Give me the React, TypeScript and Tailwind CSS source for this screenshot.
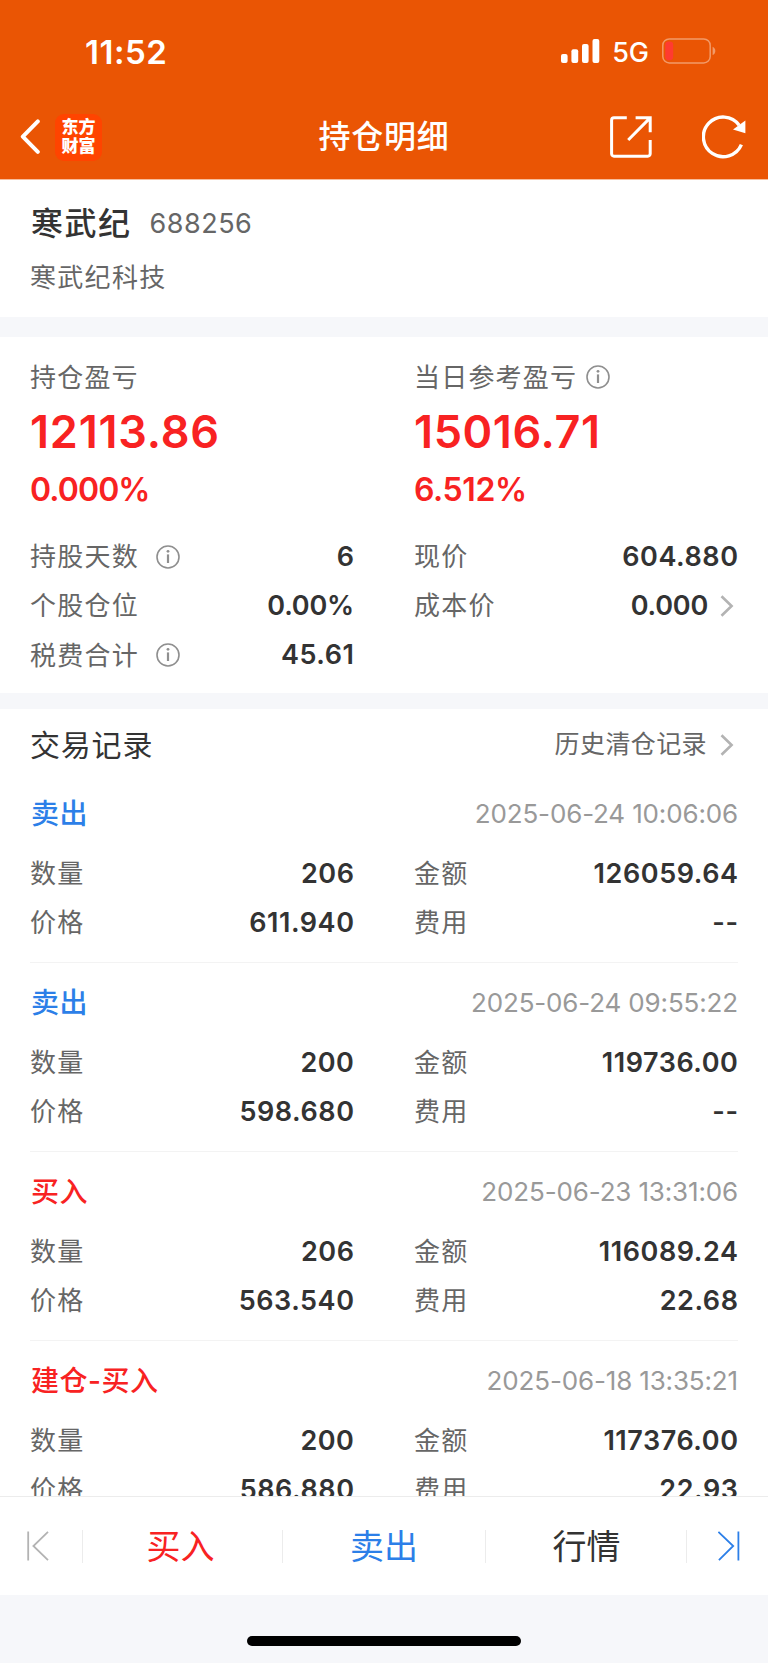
import React from 'react';

type Trade = {
  side: string;
  isSell: boolean;
  time: string;
  quantity: string;
  amount: string;
  price: string;
  fee: string;
};

const trades: Trade[] = [
  { side: '卖出', isSell: true, time: '2025-06-24 10:06:06', quantity: '206', amount: '126059.64', price: '611.940', fee: '--' },
  { side: '卖出', isSell: true, time: '2025-06-24 09:55:22', quantity: '200', amount: '119736.00', price: '598.680', fee: '--' },
  { side: '买入', isSell: false, time: '2025-06-23 13:31:06', quantity: '206', amount: '116089.24', price: '563.540', fee: '22.68' },
  { side: '建仓-买入', isSell: false, time: '2025-06-18 13:35:21', quantity: '200', amount: '117376.00', price: '586.880', fee: '22.93' },
];

function InfoIcon() {
  return (
    <svg width="24" height="24" viewBox="0 0 24 24" fill="none" stroke="#8f8f8f" className="shrink-0">
      <circle cx="12" cy="12" r="11" strokeWidth="1.6" />
      <path d="M12 9.4v8.6" strokeWidth="2.2" />
      <circle cx="12" cy="6.3" r="1.4" fill="#8f8f8f" stroke="none" />
    </svg>
  );
}

function ChevronRight() {
  return (
    <svg width="14" height="22" viewBox="0 0 14 22" fill="none" stroke="#b3b3b3" strokeWidth="2.6" className="shrink-0">
      <path d="M1.5 1.2 11.6 11 1.5 20.8" />
    </svg>
  );
}

function StatusBar() {
  return (
    <div className="flex h-[102px] items-center justify-between pl-[85px] pr-[52px] text-white">
      <span className="mt-[2px] text-[33px] font-semibold leading-none tracking-[0.5px]">11:52</span>
      <div className="flex items-center">
        <svg width="39" height="24" viewBox="0 0 39 24" fill="white">
          <rect x="0" y="15" width="6.6" height="9" rx="2" />
          <rect x="10.4" y="10.3" width="6.8" height="13.7" rx="2" />
          <rect x="21" y="5" width="6.6" height="19" rx="2" />
          <rect x="31.5" y="0" width="6.8" height="24" rx="2" />
        </svg>
        <span className="ml-3 mt-[3px] text-[27px] font-medium leading-none">5G</span>
        <svg width="54" height="26" viewBox="0 0 54 26" fill="none" className="ml-[13px]">
          <rect x="0.8" y="0.9" width="47.4" height="24" rx="6.5" stroke="#f29a68" strokeWidth="1.5" />
          <rect x="3.2" y="3.6" width="8" height="18.6" rx="3.4" fill="#ff3b30" />
          <path d="M50.6 8.8c3.6 1.4 3.6 6.8 0 8.2z" fill="#f29a68" />
        </svg>
      </div>
    </div>
  );
}

function NavBar() {
  return (
    <div className="grid h-[70px] grid-cols-[1fr_auto_1fr] items-center text-white">
      <div className="flex items-center pl-[19px]">
        <svg width="22" height="36" viewBox="0 0 22 36" fill="none" stroke="white" strokeWidth="4" strokeLinecap="round" strokeLinejoin="round">
          <path d="M18.8 2.4 3.8 17.6 18.8 32.8" />
        </svg>
        <div className="ml-[14px] flex h-[47px] w-[47px] flex-col items-center justify-center rounded-[9px] bg-[#ff4400] text-[17px] font-black leading-[19px]">
          <span>东方</span>
          <span>财富</span>
        </div>
      </div>
      <h1 className="text-[32px] font-medium leading-none tracking-[0.7px]">持仓明细</h1>
      <div className="flex items-center justify-end gap-[50px] pr-[22px]">
        <svg width="42" height="42" viewBox="0 0 42 42" fill="none" stroke="white" strokeWidth="3">
          <path d="M16.8 1.8H4a2.4 2.4 0 0 0-2.4 2.4v33.6A2.4 2.4 0 0 0 4 40.2h33.8a2.4 2.4 0 0 0 2.4-2.4V24" />
          <path d="M25.6 1.8h14.6v14.4M39.6 2.4 18.2 24" />
        </svg>
        <svg width="44" height="44" viewBox="0 0 44 44" fill="none" stroke="white" strokeWidth="3.4">
          <path d="M39.4 29.6A19.8 19.8 0 1 1 37.2 10.2" />
          <path d="M43.4 5.4v12.8L31 14.4z" fill="white" stroke="none" />
        </svg>
      </div>
    </div>
  );
}

function Row({ label, value, info, chevron }: { label: string; value: string; info?: boolean; chevron?: boolean }) {
  const tracking = value.startsWith('0.') ? 'tracking-[-0.2px]' : 'tracking-[0.55px] -mr-[0.5px]';

  return (
    <div className="flex h-[49px] items-center">
      <span className="mr-[17px] text-[26px] tracking-[1.25px] text-[#666]">{label}</span>
      {info && <InfoIcon />}
      <span className="ml-auto flex items-center">
        <span className={`mt-px text-[27px] font-semibold text-[#333] ${tracking}`}>{value}</span>
        {chevron && (
          <span className="ml-3 mr-1">
            <ChevronRight />
          </span>
        )}
      </span>
    </div>
  );
}

function Summary() {
  return (
    <section className="h-[356px] bg-white px-[30px] pt-[18px]">
      <div className="grid grid-cols-2 gap-x-[60px]">
        <div>
          <div className="flex h-11 items-center text-[26px] tracking-[1.2px] text-[#666]">持仓盈亏</div>
          <div className="flex h-[66px] items-center text-[45px] font-semibold tracking-[0.8px] text-[#f82222]">12113.86</div>
          <div className="flex h-[50px] items-center text-[32px] font-semibold tracking-[-0.9px] text-[#f82222]">0.000%</div>
        </div>
        <div>
          <div className="flex h-11 items-center gap-[9px] text-[26px] tracking-[1.2px] text-[#666]">
            当日参考盈亏
            <InfoIcon />
          </div>
          <div className="flex h-[66px] items-center text-[45px] font-semibold tracking-[0.6px] text-[#f82222]">15016.71</div>
          <div className="flex h-[50px] items-center text-[32px] font-semibold tracking-[-0.4px] text-[#f82222]">6.512%</div>
        </div>
      </div>
      <div className="mt-[17px] grid grid-cols-2 gap-x-[60px] gap-y-[0.3px]">
        <Row label="持股天数" value="6" info />
        <Row label="现价" value="604.880" />
        <Row label="个股仓位" value="0.00%" />
        <Row label="成本价" value="0.000" chevron />
        <Row label="税费合计" value="45.61" info />
      </div>
    </section>
  );
}

function TradeItem({ trade }: { trade: Trade }) {
  return (
    <div className="h-[189px] shrink-0 border-b border-[#f3f3f3] pt-[15px]">
      <div className="flex h-[50px] items-center justify-between">
        <span className={`pl-px text-[28px] font-medium tracking-[0.5px] ${trade.isSell ? 'text-[#2c7fe8]' : 'text-[#f82222]'}`}>{trade.side}</span>
        <span className="mb-[2px] text-[26px] tracking-[-0.15px] text-[#999]">{trade.time}</span>
      </div>
      <div className="mt-[10px] grid grid-cols-2 gap-x-[60px]">
        <Row label="数量" value={trade.quantity} />
        <Row label="金额" value={trade.amount} />
        <Row label="价格" value={trade.price} />
        <Row label="费用" value={trade.fee} />
      </div>
    </div>
  );
}

function BottomBar() {
  return (
    <nav className="flex h-[99px] shrink-0 items-center border-t border-[#ececec] bg-white text-[34px]">
      <div className="flex w-[82px] justify-end pr-[33px]">
        <svg width="22" height="30" viewBox="0 0 22 30" fill="none" stroke="#b3b3b3" strokeWidth="1.8">
          <path d="M1.2.5v29M21 .8 6.4 15 21 29.2" />
        </svg>
      </div>
      <div className="h-[33px] w-px bg-[#ececec]" />
      <button className="w-[199px] pr-[4px] text-[#f82222]">买入</button>
      <div className="h-[33px] w-px bg-[#ececec]" />
      <button className="w-[202px] text-[#2c7fe8]">卖出</button>
      <div className="h-[33px] w-px bg-[#ececec]" />
      <button className="w-[200px] pl-px text-[#333]">行情</button>
      <div className="h-[33px] w-px bg-[#ececec]" />
      <div className="flex flex-1 pl-[31px]">
        <svg width="23" height="30" viewBox="0 0 23 30" fill="none" stroke="#2c7fe8" strokeWidth="1.8">
          <path d="M20.4.5v29M.4.8 15.2 15 .9 29.2" />
        </svg>
      </div>
    </nav>
  );
}

export default function App() {
  return (
    <div className="flex h-[1663px] w-[768px] flex-col overflow-hidden bg-[#f6f7fa] font-['Inter','Noto_Sans_CJK_SC',sans-serif]">
      <header className="h-[180px] shrink-0 border-b border-[#f7bd9b] bg-[#ea5504]">
        <StatusBar />
        <NavBar />
      </header>

      <section className="h-[137px] shrink-0 bg-white px-[30px] pt-[17px]">
        <div className="flex h-[54px] items-center">
          <h2 className="pl-px text-[32px] font-medium tracking-[1.5px] text-[#333]">寒武纪</h2>
          <span className="ml-[18px] text-[27px] tracking-[0.5px] text-[#666]">688256</span>
        </div>
        <div className="mt-[6px] flex h-10 items-center text-[26px] tracking-[1.3px] text-[#666]">寒武纪科技</div>
      </section>

      <div className="mt-5 shrink-0">
        <Summary />
      </div>

      <section className="mt-4 flex h-[787px] shrink-0 flex-col overflow-hidden bg-white px-[30px]">
        <div className="flex h-[65px] shrink-0 items-center pt-[7px]">
          <h3 className="text-[30px] tracking-[0.8px] text-[#333]">交易记录</h3>
          <span className="ml-auto text-[25px] tracking-[0.4px] text-[#666]">历史清仓记录</span>
          <span className="ml-[13px] mr-1">
            <ChevronRight />
          </span>
        </div>
        {trades.map((trade) => (
          <TradeItem key={trade.time} trade={trade} />
        ))}
      </section>

      <BottomBar />

      {/* Home indicator */}
      <div className="flex flex-1 items-end justify-center pb-[17px]">
        <div className="h-[10px] w-[274px] rounded-full bg-black" />
      </div>
    </div>
  );
}
